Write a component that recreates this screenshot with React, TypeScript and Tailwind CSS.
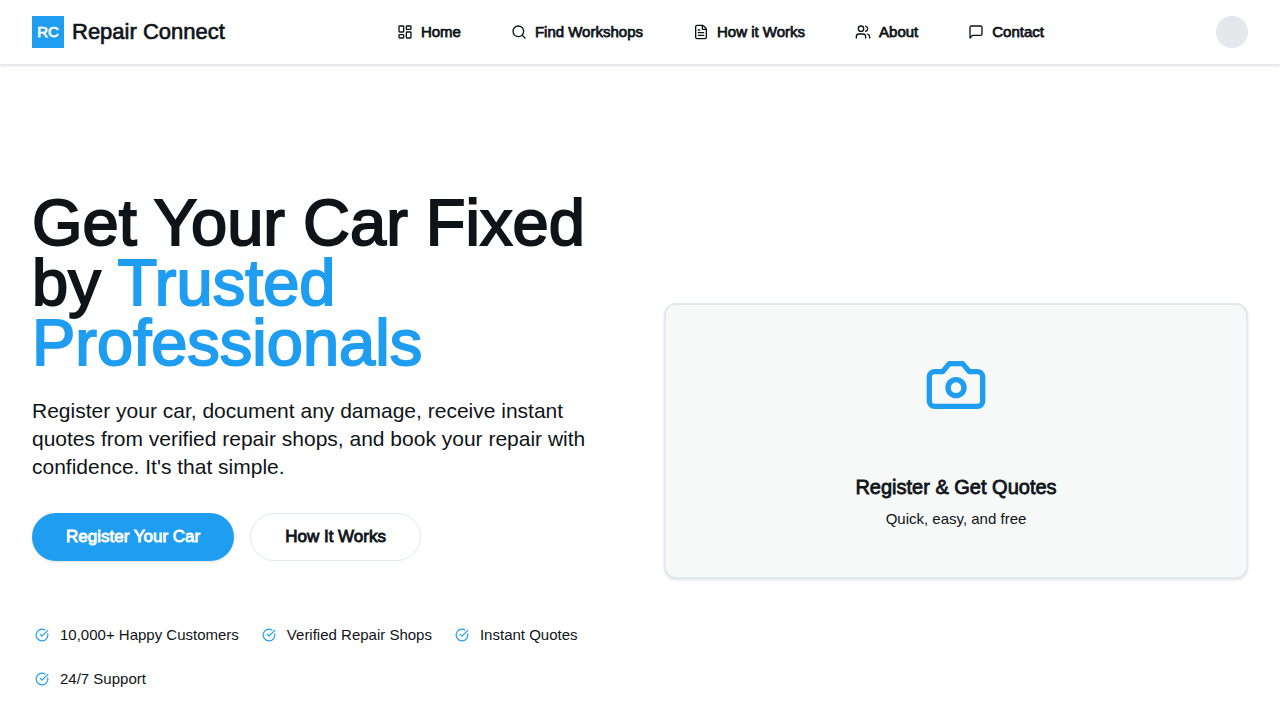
import { CircleCheckBig, FileText, LayoutDashboard, Search, Users } from "lucide-react";
import type { ComponentType, SVGProps } from "react";

type Icon = ComponentType<SVGProps<SVGSVGElement>>;

function MessageIcon(props: SVGProps<SVGSVGElement>) {
  return (
    <svg viewBox="0 0 24 24" fill="none" stroke="currentColor" strokeWidth="2" strokeLinecap="round" strokeLinejoin="round" {...props}>
      <path d="M21 15a2 2 0 0 1-2 2H7l-4 4V5a2 2 0 0 1 2-2h14a2 2 0 0 1 2 2z" />
    </svg>
  );
}

function CameraIcon(props: SVGProps<SVGSVGElement>) {
  return (
    <svg viewBox="0 0 24 24" fill="none" stroke="currentColor" strokeWidth="2" strokeLinecap="round" strokeLinejoin="round" {...props}>
      <path d="M14.5 4h-5L7 7H4a2 2 0 0 0-2 2v9a2 2 0 0 0 2 2h16a2 2 0 0 0 2-2V9a2 2 0 0 0-2-2h-3l-2.5-3z" />
      <circle cx="12" cy="13" r="3" />
    </svg>
  );
}

const links: { label: string; icon: Icon }[] = [
  { label: "Home", icon: LayoutDashboard },
  { label: "Find Workshops", icon: Search },
  { label: "How it Works", icon: FileText },
  { label: "About", icon: Users },
  { label: "Contact", icon: MessageIcon },
];

const features = ["10,000+ Happy Customers", "Verified Repair Shops", "Instant Quotes", "24/7 Support"];

function Header() {
  return (
    <header className="border-b border-[#e1eaef] bg-white shadow-sm">
      <div className="flex h-16 items-center justify-between px-8">
        <a href="#" className="flex items-center gap-2">
          <span className="flex size-8 items-center justify-center bg-[#1e9df1] text-[15px] text-white [-webkit-text-stroke:0.05em]">RC</span>
          <span className="text-[22px] leading-7 [-webkit-text-stroke:0.03em]">Repair Connect</span>
        </a>
        <nav className="flex items-center gap-[50px]">
          {links.map(({ label, icon: Glyph }) => (
            <a key={label} href="#" className="flex items-center gap-2 text-[15px] leading-5">
              <Glyph className="size-4" aria-hidden="true" />
              <span className="[-webkit-text-stroke:0.05em]">{label}</span>
            </a>
          ))}
        </nav>
        <button type="button" aria-label="Account" className="size-8 rounded-full bg-gray-200" />
      </div>
    </header>
  );
}

function Hero() {
  return (
    <section className="grid grid-cols-2 items-center gap-12 px-8 py-32">
      <div>
        <h1 className="text-[65px] leading-[60px] [-webkit-text-stroke:0.03em]">
          Get Your Car Fixed by <span className="text-[#1e9df1]">Trusted Professionals</span>
        </h1>
        <p className="mt-6 text-[21px] leading-7">
          Register your car, document any damage, receive instant quotes from verified repair shops, and book your
          repair with confidence. It's that simple.
        </p>
        <div className="mt-8 flex gap-4">
          <button type="button" className="h-12 rounded-full bg-[#1e9df1] px-[34px] text-[17px] text-white shadow-sm [-webkit-text-stroke:0.05em]">
            Register Your Car
          </button>
          <button type="button" className="h-12 rounded-full border border-[#e1eaef] bg-white px-[34px] text-[17px] [-webkit-text-stroke:0.05em]">
            How It Works
          </button>
        </div>
        <ul className="mt-16 flex flex-wrap gap-x-5 gap-y-6">
          {features.map((feature) => (
            <li key={feature} className="flex items-center gap-2 text-[15px] leading-5">
              <span className="flex w-5 justify-center text-[#1e9df1]">
                <CircleCheckBig className="size-3.5" aria-hidden="true" />
              </span>
              {feature}
            </li>
          ))}
        </ul>
      </div>
      <div className="flex flex-col items-center rounded-xl border-2 border-[#e1eaef] bg-[#f7f8f8] p-12 text-center shadow-sm">
        <CameraIcon className="size-16 text-[#1e9df1]" aria-hidden="true" />
        <h2 className="mt-14 text-xl leading-7 [-webkit-text-stroke:0.04em]">Register &amp; Get Quotes</h2>
        <p className="mt-2 text-[15px] leading-5">Quick, easy, and free</p>
      </div>
    </section>
  );
}

export default function App() {
  return (
    <div className="h-screen overflow-hidden bg-white font-['Liberation_Sans',Arial,sans-serif] text-[#0f1419]">
      <Header />
      <main>
        <Hero />
      </main>
    </div>
  );
}
